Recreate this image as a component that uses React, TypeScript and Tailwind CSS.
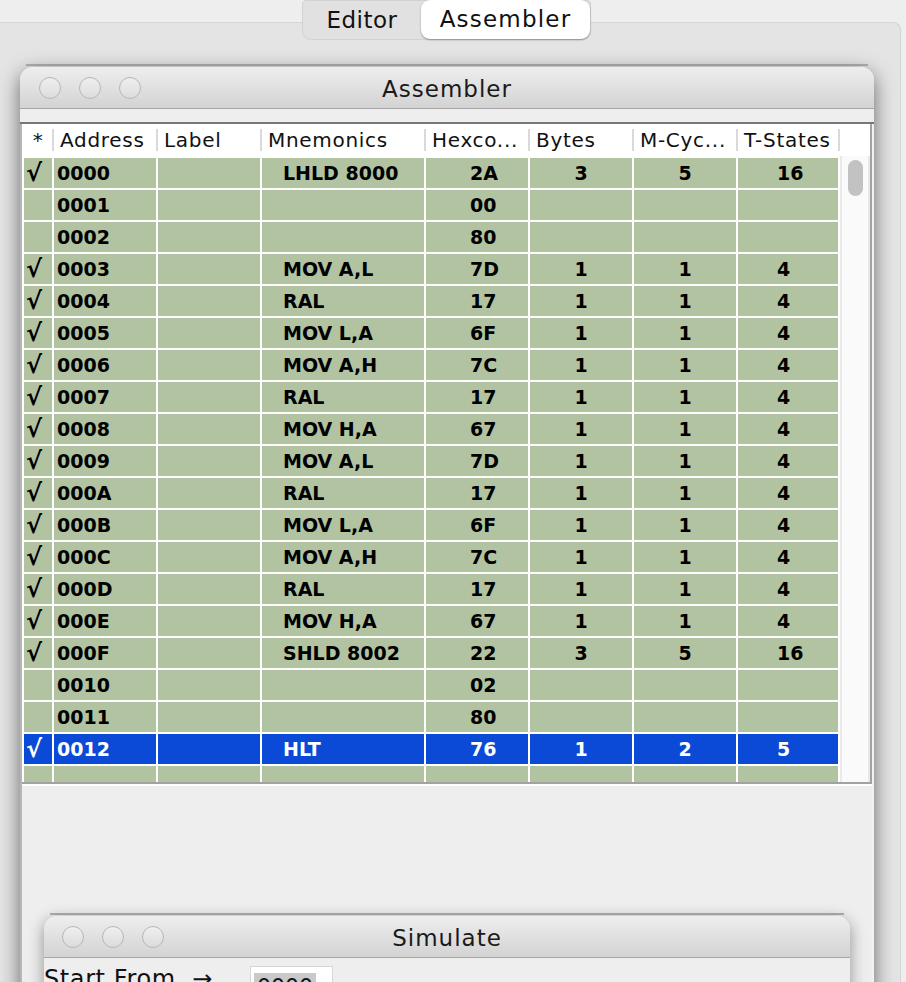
import React from "react";

type Row = {
    ok: boolean;
    addr: string;
    mn: string;
    hex: string;
    bytes: string;
    m: string;
    t: string;
};

const rows: Row[] = [
    {ok: true, addr: "0000", mn: "LHLD 8000", hex: "2A", bytes: "3", m: "5", t: "16"},
    {ok: false, addr: "0001", mn: "", hex: "00", bytes: "", m: "", t: ""},
    {ok: false, addr: "0002", mn: "", hex: "80", bytes: "", m: "", t: ""},
    {ok: true, addr: "0003", mn: "MOV A,L", hex: "7D", bytes: "1", m: "1", t: "4"},
    {ok: true, addr: "0004", mn: "RAL", hex: "17", bytes: "1", m: "1", t: "4"},
    {ok: true, addr: "0005", mn: "MOV L,A", hex: "6F", bytes: "1", m: "1", t: "4"},
    {ok: true, addr: "0006", mn: "MOV A,H", hex: "7C", bytes: "1", m: "1", t: "4"},
    {ok: true, addr: "0007", mn: "RAL", hex: "17", bytes: "1", m: "1", t: "4"},
    {ok: true, addr: "0008", mn: "MOV H,A", hex: "67", bytes: "1", m: "1", t: "4"},
    {ok: true, addr: "0009", mn: "MOV A,L", hex: "7D", bytes: "1", m: "1", t: "4"},
    {ok: true, addr: "000A", mn: "RAL", hex: "17", bytes: "1", m: "1", t: "4"},
    {ok: true, addr: "000B", mn: "MOV L,A", hex: "6F", bytes: "1", m: "1", t: "4"},
    {ok: true, addr: "000C", mn: "MOV A,H", hex: "7C", bytes: "1", m: "1", t: "4"},
    {ok: true, addr: "000D", mn: "RAL", hex: "17", bytes: "1", m: "1", t: "4"},
    {ok: true, addr: "000E", mn: "MOV H,A", hex: "67", bytes: "1", m: "1", t: "4"},
    {ok: true, addr: "000F", mn: "SHLD 8002", hex: "22", bytes: "3", m: "5", t: "16"},
    {ok: false, addr: "0010", mn: "", hex: "02", bytes: "", m: "", t: ""},
    {ok: false, addr: "0011", mn: "", hex: "80", bytes: "", m: "", t: ""},
    {ok: true, addr: "0012", mn: "HLT", hex: "76", bytes: "1", m: "2", t: "5"},
    {ok: false, addr: "", mn: "", hex: "", bytes: "", m: "", t: ""},
];

const SELECTED = 18;

const headers = [
    {label: "*", w: "w-[30px]", center: true},
    {label: "Address", w: "w-[104px]"},
    {label: "Label", w: "w-[104px]"},
    {label: "Mnemonics", w: "w-[164px]"},
    {label: "Hexco...", w: "w-[104px]"},
    {label: "Bytes", w: "w-[104px]"},
    {label: "M-Cyc...", w: "w-[104px]"},
    {label: "T-States", w: "w-[102px]"},
];

const Lights = ({pad}: {pad: string}) => (
    <div className={`flex items-center gap-[18px] ${pad}`}>
        {[0, 1, 2].map((i) => (
            <span key={i}
                  className="w-[22px] h-[22px] rounded-full border border-[#b7b7b7] bg-gradient-to-b from-[#efefef] to-[#dcdcdc]"/>
        ))}
    </div>
);

const TitleBar = ({title, pad}: {title: string; pad: string}) => (
    <div
        className="grid grid-cols-[1fr_auto_1fr] items-center h-[42px] rounded-t-[13px] bg-gradient-to-b from-[#eeeeee] to-[#d3d3d3] border-b border-[#a6a6a6]">
        <Lights pad={pad}/>
        <span className="pt-[3px] text-[23px] tracking-[1px] text-[#1a1a1a] leading-none">{title}</span>
        <span/>
    </div>
);

const App = () => {
    return (
        <div className="relative w-[906px] h-[982px] overflow-hidden bg-[#eeeeee] flex flex-col"
             style={{fontFamily: '"DejaVu Sans", sans-serif'}}>

            {/* tabs */}
            <div
                className="absolute left-[302px] top-0 w-[289px] h-[40px] flex rounded-b-[9px] rounded-t-[4px] bg-[#e1e1e1] border border-[#d2d2d2] z-10">
                <div className="w-[118px] flex items-center justify-center text-[23px] tracking-[0.5px] text-[#111]">Editor</div>
                <div
                    className="flex-1 -mt-px h-[39px] flex items-center justify-center rounded-[9px] bg-white shadow-[0_1px_2px_rgba(0,0,0,0.35)] text-[23px] tracking-[1.2px] text-[#111]">
                    Assembler
                </div>
            </div>

            <div className="h-[22px] shrink-0"/>

            {/* tab content panel */}
            <div className="flex-1 mr-[5px] bg-[#e4e4e4] border-t border-r border-[#d4d4d4] rounded-tr-[8px] pt-[41px] pl-[20px]">

                <div className="w-[854px] flex flex-col">
                    <div className="mx-[6px] h-[2px] bg-[#b2b2b2] mb-px"/>

                    {/* Assembler frame */}
                    <div className="flex flex-col rounded-t-[13px] shadow-[0_6px_20px_rgba(0,0,0,0.55)] bg-[#eeeeee]">
                        <TitleBar title="Assembler" pad="pl-[19px]"/>

                        <div className="h-[13px] bg-[#eeeeee]"/>
                        <div className="h-[2px] bg-[#777777]"/>

                        <div className="border-l-2 border-[#b6b6b6] pr-[2px] bg-[#f2f2f2]">
                            <div className="border-r-2 border-b-2 border-[#a2a2a2] bg-white">

                                {/* header */}
                                <div className="flex h-[32px] pl-[2px] bg-white">
                                    {headers.map((h) => (
                                        <div key={h.label} className={`${h.w} flex items-center`}>
                                            <span
                                                className={`flex-1 text-[20px] tracking-[0.7px] text-[#111] leading-none ${h.center ? "text-center" : "pl-[6px]"}`}>
                                                {h.label}
                                            </span>
                                            <span className="w-[2px] h-[22px] bg-[#dadada]"/>
                                        </div>
                                    ))}
                                </div>

                                {/* body + scrollbar */}
                                <div className="flex h-[626px] overflow-hidden">
                                    <div className="w-[818px] bg-white">
                                        {rows.map((r, i) => {
                                            const sel = i === SELECTED;
                                            const cell = `h-[30px] flex items-center ${sel ? "bg-[#0a4ad6] text-white" : "bg-[#b1c3a1] text-black"}`;
                                            return (
                                                <div key={i}
                                                     className="grid grid-cols-[28px_102px_102px_162px_102px_102px_102px_100px] gap-x-[2px] px-[2px] pt-[2px] text-[19px] font-bold leading-none">
                                                    <div className={`${cell} pl-[2px] text-[24px]`}>{r.ok ? "√" : ""}</div>
                                                    <div className={`${cell} pl-[3px]`}>{r.addr}</div>
                                                    <div className={cell}/>
                                                    <div className={`${cell} pl-[21px]`}>{r.mn}</div>
                                                    <div className={`${cell} pl-[44px]`}>{r.hex}</div>
                                                    <div className={`${cell} justify-center`}>{r.bytes}</div>
                                                    <div className={`${cell} justify-center`}>{r.m}</div>
                                                    <div className={`${cell} pl-[39px]`}>{r.t}</div>
                                                </div>
                                            );
                                        })}
                                    </div>
                                    <div className="w-[30px] bg-[#fafafa] border-l-2 border-r-2 border-[#e9e9e9]">
                                        <div className="mt-[4px] ml-[6px] w-[15px] h-[36px] rounded-full bg-[#c2c2c2]"/>
                                    </div>
                                </div>
                            </div>

                            {/* lower area with Simulate frame */}
                            <div className="h-[300px] bg-[#eeeeee] border-t-2 border-white pt-[127px] pl-[22px]">
                                <div className="w-[806px] flex flex-col">
                                    <div className="mx-[6px] h-[2px] bg-[#b0b0b0] mb-px"/>
                                    <div className="flex flex-col rounded-t-[13px] shadow-[0_4px_16px_rgba(0,0,0,0.4)] bg-[#eeeeee]">
                                        <TitleBar title="Simulate" pad="pl-[18px]"/>
                                        <div className="flex items-start pt-[8px] h-[120px]">
                                            <span className="w-[206px] text-[24px] tracking-[0.6px] leading-[26px] text-[#111] whitespace-pre">Start From  →</span>
                                            <div className="w-[83px] h-[40px] bg-white border border-[#d6d6d6] pt-[6px] pl-[3px]">
                                                <span className="inline-block bg-[#c9c9c9] px-[3px] text-[22px] leading-[28px] text-[#111]">0000</span>
                                            </div>
                                        </div>
                                    </div>
                                </div>
                            </div>
                        </div>
                    </div>
                </div>
            </div>
        </div>
    );
};

export default App;
